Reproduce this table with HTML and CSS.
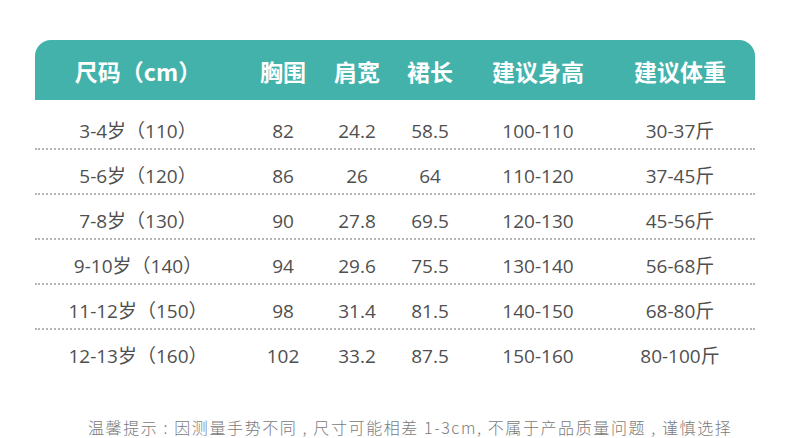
FILE: index.html
```html
<!DOCTYPE html>
<html lang="zh">
<head>
<meta charset="utf-8">
<link rel="stylesheet" href="styles.css">
</head>
<body>
<div class="page">
  <div class="table">
    <div class="head">
      <div class="c c1">尺码（cm）</div>
      <div class="c">胸围</div>
      <div class="c">肩宽</div>
      <div class="c">裙长</div>
      <div class="c">建议身高</div>
      <div class="c">建议体重</div>
    </div>
    <div class="row first">
      <div class="c c1">3-4岁（110）</div><div class="c">82</div><div class="c">24.2</div><div class="c">58.5</div><div class="c">100-110</div><div class="c">30-37斤</div>
    </div>
    <div class="row">
      <div class="c c1">5-6岁（120）</div><div class="c">86</div><div class="c">26</div><div class="c">64</div><div class="c">110-120</div><div class="c">37-45斤</div>
    </div>
    <div class="row">
      <div class="c c1">7-8岁（130）</div><div class="c">90</div><div class="c">27.8</div><div class="c">69.5</div><div class="c">120-130</div><div class="c">45-56斤</div>
    </div>
    <div class="row">
      <div class="c c1">9-10岁（140）</div><div class="c">94</div><div class="c">29.6</div><div class="c">75.5</div><div class="c">130-140</div><div class="c">56-68斤</div>
    </div>
    <div class="row">
      <div class="c c1">11-12岁（150）</div><div class="c">98</div><div class="c">31.4</div><div class="c">81.5</div><div class="c">140-150</div><div class="c">68-80斤</div>
    </div>
    <div class="row last">
      <div class="c c1">12-13岁（160）</div><div class="c">102</div><div class="c">33.2</div><div class="c">87.5</div><div class="c">150-160</div><div class="c">80-100斤</div>
    </div>
  </div>
  <p class="note">温馨提示 : 因测量手势不同 , 尺寸可能相差 1-3cm, 不属于产品质量问题 , 谨慎选择</p>
</div>
</body>
</html>
```

FILE: styles.css
```css
html, body {
  margin: 0;
  padding: 0;
  background: #fff;
}
.page {
  width: 790px;
  height: 438px;
  overflow: hidden;
  padding: 40px 0 0 35px;
  box-sizing: border-box;
  font-family: "Open Sans", "Noto Sans CJK SC", sans-serif;
}
.table {
  width: 720px;
}
.head,
.row {
  display: grid;
  grid-template-columns: 206px 84px 64px 82px 134px 150px;
}
.head {
  height: 60px;
  align-items: center;
  background: #43b2aa;
  border-radius: 16px 16px 0 0;
  color: #fff;
  font-family: "Noto Sans CJK SC", sans-serif;
  font-weight: 700;
  font-size: 23px;
}
.head .c {
  text-align: center;
  padding-top: 2px;
  white-space: nowrap;
}
.row {
  height: 45px;
  box-sizing: border-box;
  padding-top: 14px;
  border-bottom: 2px dotted #b4b4b4;
  color: #4f4f4f;
  font-size: 19px;
  line-height: 24px;
}
.row.first {
  height: 50px;
  padding-top: 19px;
}
.row.last {
  border-bottom: none;
}
.row .c {
  text-align: center;
  white-space: nowrap;
}
.note {
  margin: 42px 0 0 53px;
  font-family: "Noto Sans CJK SC", sans-serif;
  font-weight: 300;
  font-size: 16px;
  line-height: 20px;
  letter-spacing: 1.6px;
  color: #7a7a7a;
  white-space: nowrap;
}
```
